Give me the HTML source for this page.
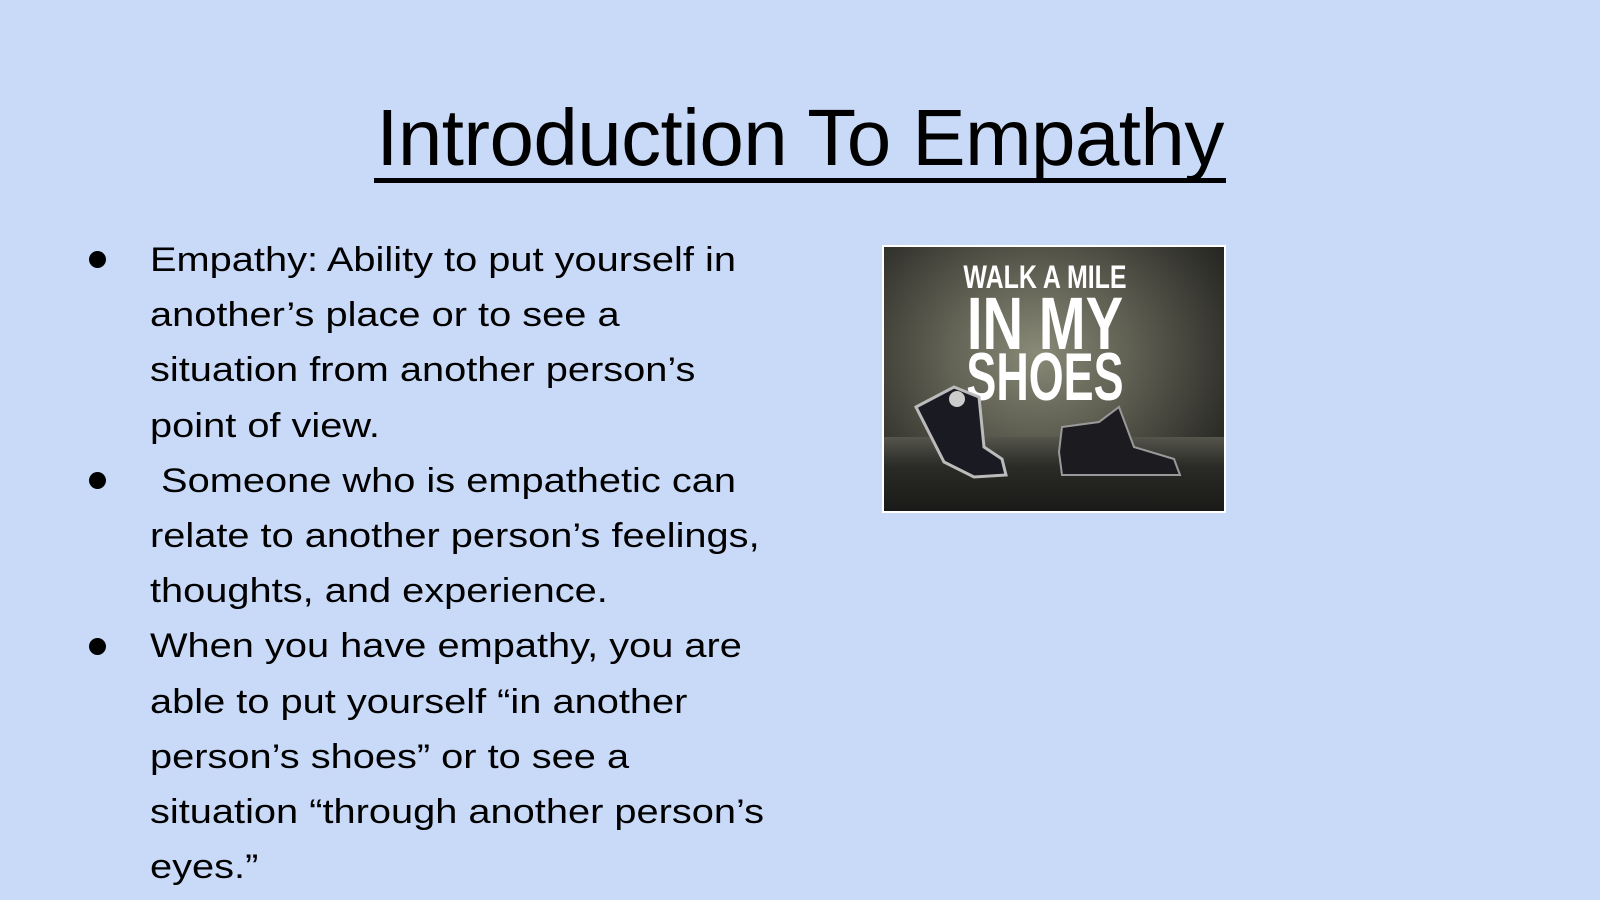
<!DOCTYPE html>
<html><head><meta charset="utf-8"><style>
html,body{margin:0;padding:0}
body{width:1600px;height:900px;background:#c9daf8;position:relative;overflow:hidden;font-family:"Liberation Sans",sans-serif;color:#000}
.title{position:absolute;left:374px;top:88px;width:852px;text-align:center;font-size:80px;font-weight:normal;letter-spacing:-0.6px;line-height:100px;white-space:nowrap}
.ul{position:absolute;left:374px;top:178px;width:852px;height:5px;background:#000}
.body{position:absolute;left:150px;top:233px;font-size:34px;line-height:55.2px;white-space:nowrap;transform:scaleX(1.17);transform-origin:0 0}
.dot{position:absolute;left:89px;width:17px;height:17px;border-radius:50%;background:#000}
.img{position:absolute;left:882px;top:245px;width:340px;height:264px;border:2px solid #fff;overflow:hidden;
background:radial-gradient(ellipse at 45% 40%,#8a8a78 0%,#5a5a4e 40%,#2a2a26 80%,#151513 100%)}
.floor{position:absolute;left:0;top:190px;width:100%;height:74px;background:linear-gradient(#55554c,#2a2a27 40%,#1a1a18)}
.t{position:absolute;color:#fff;font-family:"Liberation Sans Narrow","Liberation Sans",sans-serif;font-weight:bold;text-align:center;left:36px;width:250px;line-height:1;white-space:nowrap}
</style></head><body>
<div class="title">Introduction To Empathy</div>
<div class="ul"></div>
<div class="dot" style="top:251px"></div>
<div class="dot" style="top:472px"></div>
<div class="dot" style="top:638px"></div>
<div class="body">Empathy: Ability to put yourself in<br>another’s place or to see a<br>situation from another person’s<br>point of view.<br>&nbsp;Someone who is empathetic can<br>relate to another person’s feelings,<br>thoughts, and experience.<br>When you have empathy, you are<br>able to put yourself “in another<br>person’s shoes” or to see a<br>situation “through another person’s<br>eyes.”</div>
<div class="img">
<div class="floor"></div>
<div class="t" style="top:14px;font-size:32px;transform:scaleX(.78)">WALK A MILE</div>
<div class="t" style="top:40px;font-size:74px;transform:scaleX(.76)">IN MY</div>
<div class="t" style="top:96px;font-size:68px;transform:scaleX(.66)">SHOES</div>
<svg style="position:absolute;left:0;top:0" width="340" height="264">
<path d="M32 160 L70 140 L95 150 L100 200 L118 212 L122 228 L90 230 L60 215 Z" fill="#1a1a22" stroke="#bbb" stroke-width="3"/>
<circle cx="73" cy="152" r="8" fill="#ccc"/>
<path d="M175 205 L178 180 L215 175 L235 160 L250 200 L290 212 L296 228 L178 228 Z" fill="#1c1c20" stroke="#999" stroke-width="2"/>
</svg>
</div>
</body></html>
